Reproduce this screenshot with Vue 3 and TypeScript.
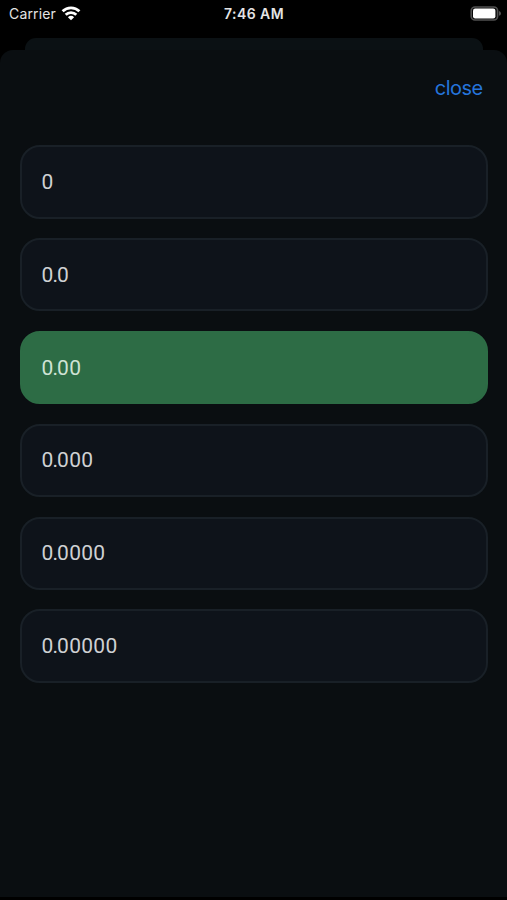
<script setup lang="ts">
import { ref } from 'vue'

interface DecimalFormat {
  whole: string
  fraction: string
}

const formats: DecimalFormat[] = [
  { whole: '0', fraction: '' },
  { whole: '0.', fraction: '0' },
  { whole: '0.', fraction: '00' },
  { whole: '0.', fraction: '000' },
  { whole: '0.', fraction: '0000' },
  { whole: '0.', fraction: '00000' },
]
const selected = ref(2)
</script>

<template>
  <div class="screen">
    <header class="status">
      <div class="carrier">
        <span class="carrier-name">Carrier</span>
        <svg class="wifi" viewBox="0 0 20 15" width="20" height="15">
          <g fill="none" stroke="#fff" stroke-width="2.8">
            <path d="M1.6 5.3 A12 12 0 0 1 18.4 5.3" />
            <path d="M4.7 8.8 A7.5 7.5 0 0 1 15.3 8.8" />
          </g>
          <path d="M6.9 11.2 A4.6 4.6 0 0 1 13.1 11.2 L10 14.3 Z" fill="#fff" />
        </svg>
      </div>
      <span class="time">7:46 AM</span>
      <svg class="battery" viewBox="0 0 32 15" width="32" height="15">
        <rect x="1.2" y="1" width="26.4" height="13" rx="3.8" fill="#090909" stroke="#505050" stroke-width="1.6" />
        <rect x="3" y="2.6" width="22.4" height="9.8" rx="2.2" fill="#fff" />
        <path d="M29 5 Q31 5.8 31 7.4 T29 9.8 Z" fill="#555" />
      </svg>
    </header>
    <div class="back-sheet"></div>
    <main class="sheet">
      <div class="toolbar">
        <button class="close" type="button">close</button>
      </div>
      <div class="options">
        <button
          v-for="(format, index) in formats"
          :key="index"
          type="button"
          class="option"
          :class="{ active: index === selected }"
          @click="selected = index"
        ><span class="whole">{{ format.whole }}</span><span>{{ format.fraction }}</span></button>
      </div>
    </main>
  </div>
</template>

<style>
body {
  background: #000;
}
</style>

<style scoped>
.screen {
  display: flex;
  flex-direction: column;
  width: 100%;
  height: 900px;
  box-sizing: border-box;
  padding-bottom: 3px;
  background: #000;
  font-family: Inter, Roboto, sans-serif;
  overflow: hidden;
}

.status {
  display: grid;
  grid-template-columns: 1fr auto 1fr;
  align-items: center;
  height: 27px;
  padding: 0 5px 0 9px;
  margin-bottom: 11px;
  color: #e4e4e4;
  flex-shrink: 0;
}

.carrier {
  display: flex;
  align-items: center;
  gap: 5px;
}

.carrier-name {
  font-size: 14px;
  letter-spacing: 0.15px;
}

.time {
  margin-right: 3px;
  font-size: 14px;
  font-weight: 600;
  letter-spacing: 0.45px;
}

.battery {
  justify-self: end;
}

.back-sheet {
  height: 12px;
  margin: 0 24px 0 25px;
  border-radius: 11px 11px 0 0;
  background: #0b1114;
  flex-shrink: 0;
}

.sheet {
  flex: 1;
  padding: 0 19.5px 0 20px;
  border-radius: 13px 13px 0 0;
  background: #0a0e11;
}

.toolbar {
  display: flex;
  justify-content: flex-end;
  align-items: center;
  height: 75px;
  margin-bottom: 20px;
  padding-right: 5px;
}

.close {
  padding: 0;
  border: 0;
  background: none;
  color: #2574db;
  font: 400 20px/24px Inter, sans-serif;
  letter-spacing: -0.55px;
}

.options {
  display: flex;
  flex-direction: column;
  gap: 19.4px;
}

.option {
  box-sizing: border-box;
  height: 73.5px;
  padding: 0 19.5px;
  border: 2px solid #192027;
  border-radius: 20px;
  background: #0e131a;
  color: #cfd1d3;
  font: 400 21px/26px Roboto, sans-serif;
  letter-spacing: 0.3px;
  text-align: left;
}

.whole {
  letter-spacing: -0.9px;
}

.option.active {
  border-color: #2d6c45;
  background: #2d6c45;
  color: #cfe3d4;
}
</style>
